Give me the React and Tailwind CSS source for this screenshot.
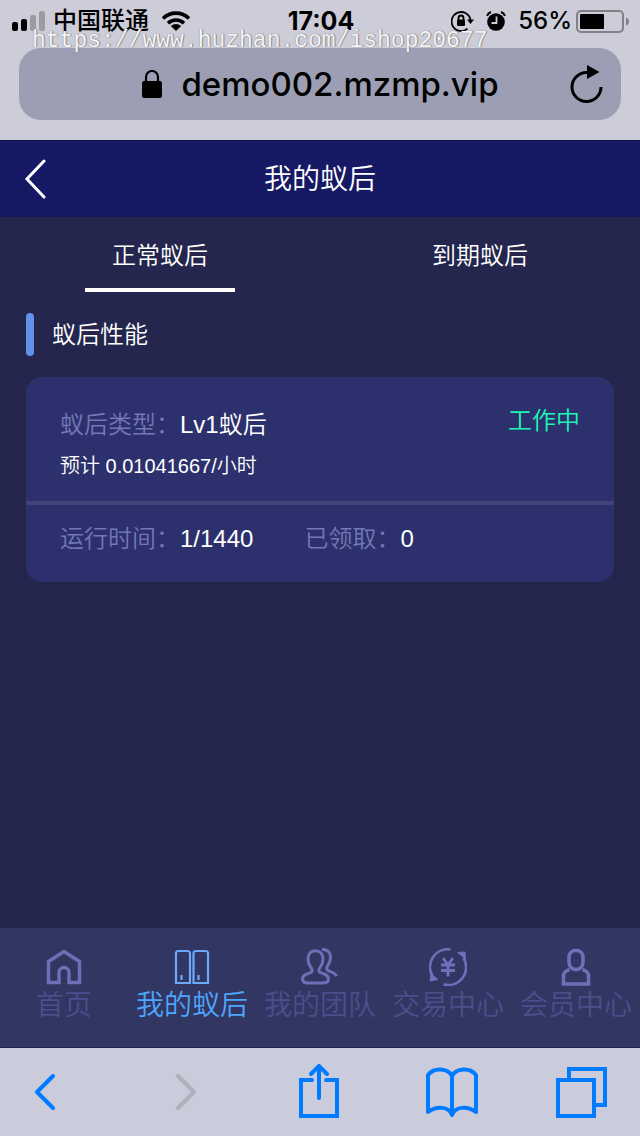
const tabs = [
  { name: "正常蚁后", active: true },
  { name: "到期蚁后", active: false },
];

function HomeIcon() {
  return (
    <svg width="38" height="38" viewBox="0 0 38 38" fill="none" stroke="currentColor" strokeWidth="3.400">
      <path d="M3.500 34.500V13.500L19 3.500l15.500 10V34.500H24V24.500a5 5 0 0 0-10 0v10z" />
    </svg>
  );
}

function QueenIcon() {
  return (
    <svg width="38" height="38" viewBox="0 0 38 38" fill="none" stroke="currentColor" strokeWidth="2.200">
      <path d="M3 35V5.500Q3 3 5.500 3h9Q17 3 17 5.500V35zM20.500 35V5.500Q20.500 3 23 3h9.500Q35 3 35 5.500V35z" />
      <path d="M8.500 27v5M25.500 27v5" />
    </svg>
  );
}

function TeamIcon() {
  return (
    <svg width="38" height="38" viewBox="0 0 38 38" fill="none" stroke="currentColor" strokeWidth="3">
      <path d="M14.500 2.800c-5 0-7.500 3.500-7.500 8 0 5 1.500 6.500 3.500 9.500 1.200 2 .8 3.700-1 4.400-4 1.500-8 2-8 6.300 0 3 2.500 4 6 4h14c3.500 0 6-1 6-4 0-4.300-4-4.800-8-6.300-1.800-.7-2.200-2.400-1-4.400 2-3 3.500-4.500 3.500-9.500 0-4.500-2.500-8-7.500-8z" />
      <path d="M21 1.500c5.500-.5 8.500 3 8.500 8 0 4.500-1.500 6.500-3 8.500-1.500 2.300-.8 4 1 4.800 4 1.700 7 2.200 8 5.500" />
    </svg>
  );
}

function TradeIcon() {
  return (
    <svg width="38" height="38" viewBox="0 0 38 38" fill="none" stroke="currentColor" strokeWidth="2.600">
      <path d="M21.500 1.500A17.700 17.700 0 0 0 3.500 28M14.500 36.300A17.700 17.700 0 0 0 34.500 10" />
      <path d="M2 26L1 33l8-1.500zM28.500 4.500L36 4l.5 7z" fill="currentColor" strokeWidth="1" />
      <path d="M14 10l5 7 5-7M19 17v11.500M12 17h14M12 22.500h14" strokeWidth="3" />
    </svg>
  );
}

function MemberIcon() {
  return (
    <svg width="38" height="38" viewBox="0 0 38 38" fill="none" stroke="currentColor" strokeWidth="3.600">
      <path d="M19 2.500c-4.700 0-7 3-7 6.500v5c0 4 2.500 7.500 7 7.500s7-3.500 7-7.500V9c0-3.500-2.300-6.500-7-6.500z" />
      <path d="M12.500 21.500C8 23 6.500 24.500 6.500 28.500v7.500h25v-7.500c0-4-1.500-5.500-6-7" />
    </svg>
  );
}

const menus = [
  { name: "首页", icon: HomeIcon },
  { name: "我的蚁后", icon: QueenIcon, active: true },
  { name: "我的团队", icon: TeamIcon },
  { name: "交易中心", icon: TradeIcon },
  { name: "会员中心", icon: MemberIcon },
];

function StatusBar() {
  return (
    <div className="grid h-[42px] grid-cols-[1fr_auto_1fr] items-center pl-3 pr-[10px] font-['Inter','Noto_Sans_CJK_SC',sans-serif] text-2xl/10 text-black">
      <div className="flex items-center gap-2">
        <svg width="33" height="20" viewBox="0 0 33 20">
          <rect y="11" width="6" height="9" rx="2" />
          <rect x="9" y="8" width="6" height="12" rx="2" />
          <rect x="18" y="4" width="6" height="16" rx="2" fill="#9b9ba1" />
          <rect x="27" width="6" height="20" rx="2" fill="#9b9ba1" />
        </svg>
        <span className="font-medium">中国联通</span>
        <svg className="ml-1" width="30" height="20" viewBox="0 0 30 20" fill="none" stroke="#000" strokeWidth="3.600">
          <path d="M2 7.500a18.500 18.500 0 0 1 26 0M7 12.300a11.500 11.500 0 0 1 16 0" />
          <path d="M9.800 15a7.500 7.500 0 0 1 10.400 0L15 20z" fill="#000" stroke="none" />
        </svg>
      </div>
      <div className="text-[25px]/10 font-bold">17:04</div>
      <div className="flex items-center justify-end">
        <svg width="23" height="22" viewBox="0 0 23 22" fill="none" stroke="#000" strokeWidth="1.800">
          <path d="M16.500 18.600A9.500 9.500 0 1 1 19.500 10" />
          <path d="M16 9.500h7L19.500 14z" fill="#000" stroke="none" />
          <rect x="6" y="9.500" width="8" height="6.500" rx="1" fill="#000" stroke="none" />
          <path d="M7.500 10V8a2.500 2.500 0 0 1 5 0v2" />
        </svg>
        <svg className="ml-3" width="20" height="20" viewBox="0 0 20 20">
          <circle cx="10" cy="11" r="8.800" />
          <path d="M1 5q1-3 4-4M19 5q-1-3-4-4" fill="none" stroke="#000" strokeWidth="2" />
          <path d="M10.500 5.500v6.500H5.500" fill="none" stroke="#cccdd8" strokeWidth="1.800" />
        </svg>
        <span className="ml-3 font-medium">56%</span>
        <svg className="ml-1" width="54" height="23" viewBox="0 0 54 23">
          <rect x="1" y="1" width="46" height="21" rx="4" fill="none" stroke="#808087" strokeWidth="2" />
          <rect x="4" y="4" width="24" height="15" rx="1" />
          <path d="M50 7.500q3 1 3 4t-3 4z" fill="#808087" />
        </svg>
      </div>
    </div>
  );
}

function AddressBar() {
  return (
    <div className="mx-[19px] mt-[6px] mb-5 flex h-18 items-center rounded-[22px] bg-[#9c9fb3] px-4">
      <div className="w-9" />
      <div className="flex flex-1 items-center justify-center gap-[18px]">
        <svg width="22" height="28" viewBox="0 0 22 28">
          <path d="M5 12V7a6 6 0 0 1 12 0v5" fill="none" stroke="#000" strokeWidth="2.200" />
          <rect x="1" y="11" width="20" height="17" rx="2" />
        </svg>
        <span className="font-['Inter',sans-serif] text-[33px]/[44px] font-medium text-black">demo002.mzmp.vip</span>
      </div>
      <button type="button" aria-label="刷新">
        <svg width="36" height="38" viewBox="0 0 36 38">
          <path d="M32 22a14.500 14.500 0 1 1-14.500-14.500h3" fill="none" stroke="#000" strokeWidth="3" />
          <path d="M18 0l12.500 7L18 14z" />
        </svg>
      </button>
    </div>
  );
}

function BrowserToolbar() {
  return (
    <div className="flex h-22 items-center justify-between bg-[#cbccdb] px-[33px] text-[#007aff]">
      <button type="button" aria-label="后退">
        <svg width="24" height="38" viewBox="0 0 24 38" fill="none" stroke="currentColor" strokeWidth="4" strokeLinecap="round" strokeLinejoin="round">
          <path d="M20 3L4 19l16 16" />
        </svg>
      </button>
      <button type="button" aria-label="前进" disabled className="ml-8 text-[#b0b0ba]">
        <svg width="24" height="38" viewBox="0 0 24 38" fill="none" stroke="currentColor" strokeWidth="4" strokeLinecap="round" strokeLinejoin="round">
          <path d="M4 3l16 16L4 35" />
        </svg>
      </button>
      <button type="button" aria-label="分享" className="ml-4">
        <svg width="42" height="56" viewBox="0 0 42 56" fill="none" stroke="currentColor" strokeWidth="4" strokeLinecap="round">
          <path d="M14 16H3v36h36V16H28M21 34V3M13 10l8-8 8 8" />
        </svg>
      </button>
      <button type="button" aria-label="书签">
        <svg width="54" height="52" viewBox="0 0 54 52" fill="none" stroke="currentColor" strokeWidth="4" strokeLinecap="round" strokeLinejoin="round">
          <path d="M27 10C23 2 9 1 3 9v37c8-6 21-6 24 3 3-9 16-9 24-3V9C45 1 31 2 27 10zM27 10v38" />
        </svg>
      </button>
      <button type="button" aria-label="标签页" className="-ml-2">
        <svg width="52" height="52" viewBox="0 0 52 52" fill="none" stroke="currentColor" strokeWidth="4" strokeLinecap="round">
          <path d="M3 14h36v36H3zM14 11V3h36v36h-8" />
        </svg>
      </button>
    </div>
  );
}

export default function App() {
  return (
    <div className="flex min-h-screen flex-col bg-[#24264e] font-['Liberation_Sans','Noto_Sans_CJK_SC',sans-serif] text-white">
      {/* 浏览器顶部 */}
      <div className="relative bg-[#cccdd8]">
        <StatusBar />
        <AddressBar />
        <div className="absolute top-7 left-8 font-['Liberation_Mono',monospace] text-[23px]/[26px] text-[#f4f4f6] [text-shadow:0_0_1px_#77777e,1px_0_1px_#88888f]">
          https://www.huzhan.com/ishop20677
        </div>
      </div>

      {/* 标题栏 */}
      <header className="grid h-[77px] grid-cols-[1fr_auto_1fr] items-center border-t border-[#11124a] bg-[#161964] px-6">
        <button type="button" aria-label="返回" className="justify-self-start">
          <svg width="24" height="40" viewBox="0 0 24 40" fill="none" stroke="currentColor" strokeWidth="3" strokeLinecap="round">
            <path d="M20 2L3 20l17 18" />
          </svg>
        </button>
        <h1 className="pt-[2px] text-[28px]/10 font-[350]">我的蚁后</h1>
      </header>

      <main className="flex-1">
        <div className="grid grid-cols-2">
          {tabs.map((tab) => (
            <button
              key={tab.name}
              type="button"
              className={
                tab.active
                  ? "mx-auto h-[75px] w-[150px] border-b-4 border-white pt-[6px] text-2xl font-[350]"
                  : "mx-auto h-[75px] w-[150px] border-b-4 border-transparent pt-[6px] text-2xl font-[350]"
              }
            >
              {tab.name}
            </button>
          ))}
        </div>

        <div className="mx-[26px] mt-[21px] flex items-center gap-[18px]">
          <span className="h-[43px] w-2 rounded-full bg-[#6192e8]" />
          <h2 className="text-2xl font-[350]">蚁后性能</h2>
        </div>

        {/* 蚁后卡片 */}
        <section className="mx-[26px] mt-[21px] rounded-2xl bg-[#2c316d]">
          <div className="flex h-32 items-start justify-between border-b-4 border-[#40447a] px-[34px] pt-7 font-[350]">
            <div>
              <p className="text-2xl/10">
                <span className="text-[#7377b5]">蚁后类型：</span>Lv1蚁后
              </p>
              <p className="text-xl/[42px]">预计 0.01041667/小时</p>
            </div>
            <span className="text-2xl/8 text-[#1ff5b5]">工作中</span>
          </div>
          <div className="flex h-[77px] items-start gap-[51px] px-[34px] pt-[14px] text-2xl/10 font-[350]">
            <p>
              <span className="text-[#7377b5]">运行时间：</span>1/1440
            </p>
            <p>
              <span className="text-[#7377b5]">已领取：</span>0
            </p>
          </div>
        </section>
      </main>

      {/* 底部菜单 */}
      <nav className="grid h-30 grid-cols-5 border-b border-[#222448] bg-[#323662] pt-5">
        {menus.map(({ name, icon: Icon, active }) => (
          <a key={name} href="#" className="flex flex-col items-center">
            <span className={active ? "text-[#6ba9fd]" : "text-[#6c70b8]"}>
              <Icon />
            </span>
            <span
              className={
                active
                  ? "text-[28px]/10 font-[350] whitespace-nowrap text-[#4ea5fb]"
                  : "text-[28px]/10 font-[350] whitespace-nowrap text-[#4b4e8c]"
              }
            >
              {name}
            </span>
          </a>
        ))}
      </nav>

      <BrowserToolbar />
    </div>
  );
}
